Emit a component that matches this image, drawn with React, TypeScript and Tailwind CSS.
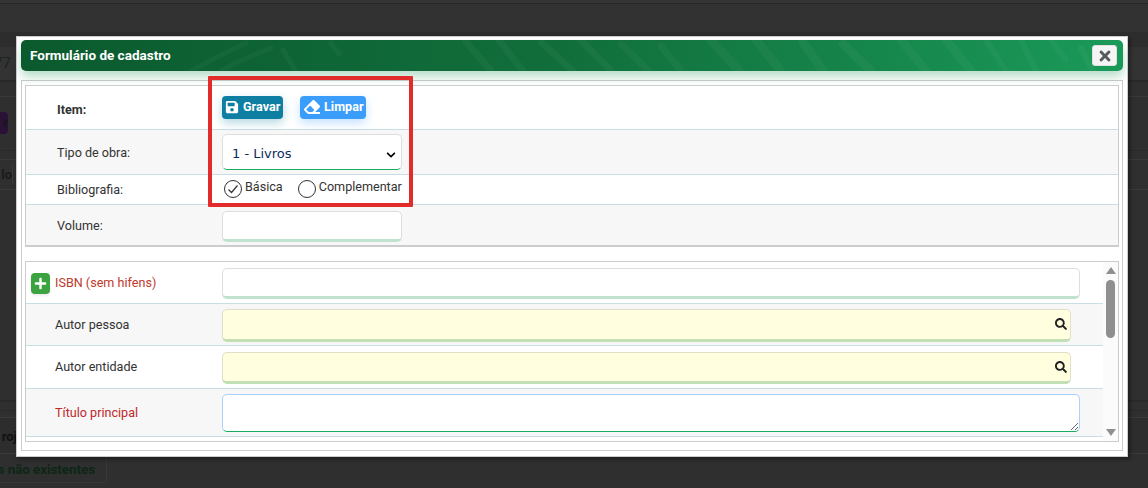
import { FaSave, FaEraser, FaPlus, FaSearch, FaTimes, FaChevronDown } from 'react-icons/fa';

const fieldBase = 'rounded-[5px] border border-[#dedede] bg-white';

const BackgroundPage = () => (
  <div className="flex h-[488px] w-full flex-col overflow-hidden bg-[#2f2f2f] font-['Roboto',sans-serif]">
    <div className="h-[4px] shrink-0 border-b border-[#262626] bg-[#343434]" />
    <div className="h-[29px] shrink-0 border-b border-[#2c2c2c] bg-[#323232]" />
    <div className="h-[14px] shrink-0 bg-[#2d2d2d]" />
    <div className="flex h-[35px] shrink-0 items-center border-b-2 border-[#282828] bg-[#333333]">
      <div className="flex w-[11px] justify-end overflow-hidden text-[15px] text-[#1e2224]">
        <span className="whitespace-nowrap">77</span>
      </div>
    </div>
    <div className="h-[15px] shrink-0 border-b border-[#383838]" />
    <div className="flex h-[53px] shrink-0 items-center pb-[1px]">
      <div className="flex h-[22px] w-[8px] items-center justify-end overflow-hidden rounded-r-[4px] bg-[#2a1136] text-[13px] font-bold text-[#17171a]">
        <span>r</span>
      </div>
    </div>
    <div className="h-[9px] shrink-0 border-t border-[#292929]" />
    <div className="flex h-[31px] shrink-0 items-center border-y border-[#3a3a3a]">
      <div className="flex w-[13px] justify-end overflow-hidden border-r border-[#3a3a3a] text-[13px] font-bold text-[#1a1a1a]">
        <span className="whitespace-nowrap">lo</span>
      </div>
    </div>
    <div className="h-[210px] shrink-0" />
    <div className="h-[2px] shrink-0 bg-[#292929]" />
    <div className="h-[8px] shrink-0" />
    <div className="h-px shrink-0 bg-[#292929]" />
    <div className="h-[7px] shrink-0 border-b border-[#3a3a3a]" />
    <div className="flex h-[36px] shrink-0 items-center border-b border-[#3a3a3a] bg-[#2d2d2d] pt-[2px]">
      <div className="flex w-[17px] justify-end overflow-hidden text-[13px] font-bold text-[#111111]">
        <span className="whitespace-nowrap">roj</span>
      </div>
    </div>
    <div className="flex h-[29px] w-[107px] shrink-0 items-center justify-end overflow-hidden rounded-br-[3px] border-r border-b border-[#383838] pr-[11px] pt-[3px] text-[13.3px] font-bold text-[#0c2616]">
      <span className="whitespace-nowrap">os não existentes</span>
    </div>
  </div>
);

const TitleBar = () => (
  <div className="relative flex h-[31px] items-center justify-between overflow-hidden rounded-[5px] bg-gradient-to-r from-[#0b5a2e] via-[#116f3c] to-[#1a9a58] pl-[9px] pr-[6px] shadow-[0_6px_10px_rgba(30,150,90,0.3)]">
    <svg className="absolute inset-0 h-full w-full" viewBox="0 0 1102 31" preserveAspectRatio="none">
      <g stroke="#ffffff" strokeOpacity="0.035" fill="none" strokeLinecap="round">
        <path strokeWidth="5" d="M170 31 C190 20 205 12 225 3 M200 31 C215 22 235 14 250 8 M262 10 L274 30 M310 3 L318 14" />
        <path strokeWidth="7" d="M445 2 L470 31 M478 0 L502 31 M520 2 L552 31 M560 0 L590 31 M600 4 L628 31 M640 6 L660 31" />
        <path strokeWidth="9" d="M690 0 L718 31 M735 0 L760 31 M782 2 L802 31 M822 4 L850 31 M880 0 L905 31 M925 0 L950 31" />
        <path strokeWidth="6" d="M965 0 L985 31 M1000 0 L1015 31 M1030 0 L1045 20 M1060 8 L1072 31" />
      </g>
    </svg>
    <span className="relative text-[13.5px] font-bold text-white">Formulário de cadastro</span>
    <button className="relative flex h-[21px] w-[25px] items-center justify-center rounded-[3px] border border-[#e0e0e0] bg-[#f5f5f5] text-[16px] text-[#555a60]">
      <FaTimes />
    </button>
  </div>
);

const FormRow = ({ label, className, labelClass, children }: { label: React.ReactNode; className: string; labelClass?: string; children: React.ReactNode }) => (
  <div className={`flex items-center border-b border-[#c9dde6] ${className}`}>
    <div className={`w-[196px] shrink-0 pl-[31px] text-[12.6px] text-[#333333] ${labelClass ?? ''}`}>{label}</div>
    {children}
  </div>
);

const Radio = ({ checked, label, className }: { checked?: boolean; label: string; className?: string }) => (
  <label className={`flex items-start ${className ?? ''}`}>
    <span className="flex size-[18px] items-center justify-center rounded-full border border-[#333333] bg-white text-[#333333]">
      {checked && (
        <svg width="12" height="12" viewBox="0 0 12 12" fill="none" stroke="currentColor" strokeWidth="1.2">
          <path d="M1.5 6.5 L4.5 9.5 L10.5 2.5" />
        </svg>
      )}
    </span>
    <span className="ml-[3px] -mt-[2px] text-[12.6px] leading-[18px] text-[#333333]">{label}</span>
  </label>
);

const TopForm = () => (
  <div className="relative mx-[3px] mt-[4px] border border-[#cccccc] border-b-2 bg-white">
    <FormRow label={<b className="font-bold">Item:</b>} labelClass="pt-[6px]" className="h-[44px] bg-white">
      <div className="flex items-center gap-[17px] pb-[1px]">
        <button className="flex h-[23px] w-[61px] items-center gap-[4px] rounded-[4px] bg-[#0e7fa3] pl-[3px] text-[12.6px] font-bold text-white shadow-[0_4px_10px_rgba(14,127,163,0.3)]">
          <FaSave className="text-[14px]" />
          Gravar
        </button>
        <button className="flex h-[23px] w-[66px] items-center gap-[4px] rounded-[4px] bg-[#3b9dfb] pl-[4px] text-[12.6px] font-bold text-white shadow-[0_4px_10px_rgba(59,157,251,0.3)]">
          <FaEraser className="text-[16px]" />
          Limpar
        </button>
      </div>
    </FormRow>
    <FormRow label="Tipo de obra:" labelClass="pt-[2px]" className="h-[45px] bg-[#f7f7f7]">
      <div className="relative">
        <select className={`${fieldBase} block h-[36px] w-[180px] appearance-none border-b-[#16ad62] pl-[9px] pt-[3px] font-['DejaVu_Sans',sans-serif] text-[13px] text-[#0b2c5c]`} defaultValue="1">
          <option value="1">1 - Livros</option>
        </select>
        <FaChevronDown className="pointer-events-none absolute right-[6px] top-[16px] text-[10px] text-black" />
      </div>
    </FormRow>
    <FormRow label="Bibliografia:" labelClass="pt-[2px]" className="h-[30px] bg-white">
      <div className="flex pb-[2px]">
        <Radio checked label="Básica" className="ml-[2px]" />
        <Radio label="Complementar" className="ml-[15px]" />
      </div>
    </FormRow>
    <FormRow label="Volume:" className="h-[40px] border-b-0 bg-[#f7f7f7] pt-[3px]">
      <input className={`${fieldBase} h-[31px] w-[180px] border-b-[3px] border-b-[#c0e2cf]`} />
    </FormRow>
  </div>
);

const SearchField = ({ height }: { height: string }) => (
  <div className={`flex ${height} w-[849px] items-center justify-end rounded-[5px] border border-[#e0e0c8] border-b-[3px] border-b-[#c2dfb6] bg-[#ffffdf] pr-[3px] text-[12px] text-[#222222]`}>
    <FaSearch />
  </div>
);

const ListForm = () => (
  <div className="mx-[3px] mt-[14px] flex h-[181px] border border-[#cccccc] bg-white">
    <div className="flex-1">
      <div className="flex h-[42px] items-center border-b border-[#c9dde6] bg-white pt-px">
        <div className="flex w-[196px] shrink-0 items-center pl-[5px]">
          <span className="flex h-[21px] w-[19px] items-center justify-center rounded-[4px] bg-[#3ba33f] text-[13px] text-white shadow-[0_2px_3px_rgba(0,0,0,0.08)]">
            <FaPlus />
          </span>
          <span className="ml-[5px] text-[12.6px] text-[#c0392b]">ISBN (sem hifens)</span>
        </div>
        <input className={`${fieldBase} h-[31px] w-[858px] border-b-[3px] border-b-[#c0e2cf]`} />
      </div>
      <div className="flex h-[42px] items-center border-b border-[#c9dde6] bg-[#f7f7f7] pt-px">
        <div className="w-[196px] shrink-0 pl-[29px] text-[12.6px] text-[#333333]">Autor pessoa</div>
        <SearchField height="h-[33px]" />
      </div>
      <div className="flex h-[43px] items-center border-b border-[#c9dde6] bg-white pt-px">
        <div className="w-[196px] shrink-0 pl-[29px] text-[12.6px] text-[#333333]">Autor entidade</div>
        <SearchField height="h-[32px]" />
      </div>
      <div className="flex h-[48px] items-center border-b border-[#c9dde6] bg-[#f7f7f7]">
        <div className="w-[196px] shrink-0 pl-[29px] pt-[2px] text-[12.6px] text-[#c0272d]">Título principal</div>
        <textarea className="h-[38px] w-[858px] rounded-[5px] border border-[#a9d2fb] border-b-[#16ad62] bg-white" />
      </div>
    </div>
    <div className="flex w-[15px] shrink-0 flex-col items-center bg-[#fbfbfb] pt-[5px]">
      <span className="h-0 w-0 border-x-[5px] border-b-[7px] border-x-transparent border-b-[#8f8f8f]" />
      <span className="mt-[6px] h-[58px] w-[9px] rounded-[5px] bg-[#8f8f8f]" />
      <span className="mt-[91px] h-0 w-0 border-x-[5px] border-t-[7px] border-x-transparent border-t-[#8f8f8f]" />
    </div>
  </div>
);

export default function App() {
  return (
    <div className="relative h-[488px] w-[1148px] overflow-hidden">
      <BackgroundPage />
      {/* modal over the page */}
      <div className="absolute left-[16px] top-[36px] h-[421px] w-[1112px] border border-[#cccccc] bg-white px-[4px] pt-[3px] font-['Roboto',sans-serif] shadow-[2px_2px_4px_rgba(0,0,0,0.4)]">
        <TitleBar />
        <div className="mt-[9px] h-[371px] w-[1102px] border border-[#cccccc] bg-white">
          <TopForm />
          <ListForm />
        </div>
        {/* highlight painted on top of the screenshot */}
        <div className="absolute left-[191px] top-[39px] h-[131px] w-[205px] rounded-[1px] border-[4px] border-[#e22c2c]" />
      </div>
    </div>
  );
}
